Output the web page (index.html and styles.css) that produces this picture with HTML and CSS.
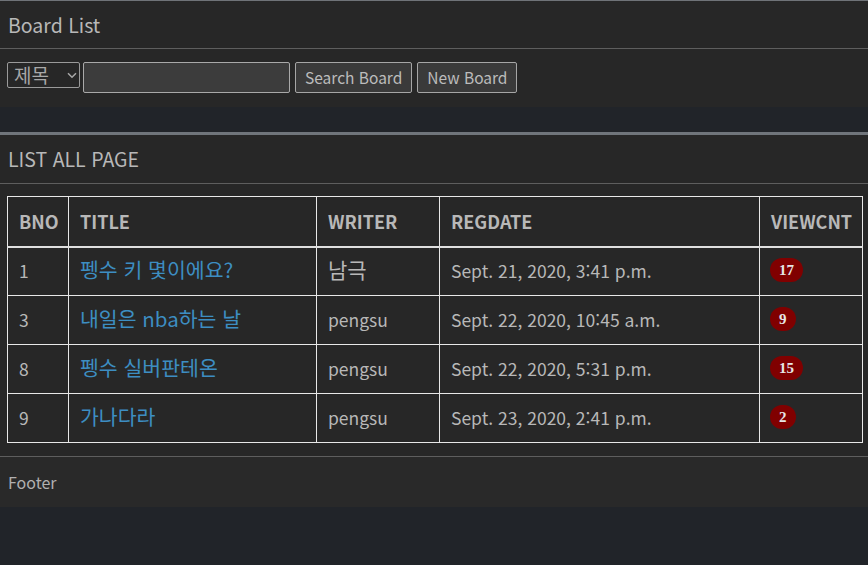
FILE: index.html
```html
<!DOCTYPE html>
<html lang="ko">
<head>
<meta charset="utf-8">
<title>Board List</title>
<link rel="stylesheet" href="styles.css">
</head>
<body>
<section class="box box-top">
  <div class="box-header"><h3 class="box-title">Board List</h3></div>
  <div class="box-body search-row">
    <div class="select-wrap">
      <select class="search-type">
        <option>제목</option>
        <option>내용</option>
        <option>작성자</option>
      </select>
      <svg class="chev" width="10" height="7" viewBox="0 0 10 7"><path d="M1 1.2 L5 5.2 L9 1.2" fill="none" stroke="#a8a8a8" stroke-width="1.5"/></svg>
    </div>
    <input class="keyword" type="text">
    <button class="btn">Search Board</button>
    <button class="btn">New Board</button>
  </div>
</section>

<section class="box box-main">
  <div class="box-header box-header-main"><h3 class="box-title">LIST ALL PAGE</h3></div>
  <div class="box-body table-wrap">
    <table class="board">
      <colgroup>
        <col class="c-bno"><col class="c-title"><col class="c-writer"><col class="c-date"><col class="c-cnt">
      </colgroup>
      <thead>
        <tr><th>BNO</th><th>TITLE</th><th>WRITER</th><th>REGDATE</th><th>VIEWCNT</th></tr>
      </thead>
      <tbody>
        <tr><td>1</td><td><a href="#" class="link">펭수 키 몇이에요?</a></td><td><span class="ko">남극</span></td><td>Sept. 21, 2020, 3:41 p.m.</td><td><span class="badge">17</span></td></tr>
        <tr><td>3</td><td><a href="#" class="link">내일은 nba하는 날</a></td><td>pengsu</td><td>Sept. 22, 2020, 10:45 a.m.</td><td><span class="badge">9</span></td></tr>
        <tr><td>8</td><td><a href="#" class="link">펭수 실버판테온</a></td><td>pengsu</td><td>Sept. 22, 2020, 5:31 p.m.</td><td><span class="badge">15</span></td></tr>
        <tr><td>9</td><td><a href="#" class="link">가나다라</a></td><td>pengsu</td><td>Sept. 23, 2020, 2:41 p.m.</td><td><span class="badge">2</span></td></tr>
      </tbody>
    </table>
  </div>
  <div class="box-footer">Footer</div>
</section>
</body>
</html>
```

FILE: styles.css
```css
html, body {
  margin: 0;
  padding: 0;
}
body {
  background: #212429;
  font-family: "Noto Sans CJK KR", "Noto Sans", sans-serif;
  color: #bdbdbd;
  width: 868px;
  height: 565px;
  overflow: hidden;
}
.box {
  background: #272727;
}
.box-top {
  border-top: 1px solid #6f7378;
}
.box-main {
  margin-top: 25px;
  border-top: 3px solid #70757b;
}
.box-header {
  height: 47px;
  border-bottom: 1px solid #5e5e5e;
  display: flex;
  align-items: center;
  padding: 0 8px;
}
.box-header-main {
  height: 48px;
}
.box-title {
  margin: 0;
  font-size: 19.5px;
  font-weight: 400;
  color: #b8b8b8;
  line-height: 1;
}
.search-row {
  display: flex;
  align-items: flex-start;
  padding: 13px 7px 14px;
}
.select-wrap {
  position: relative;
  width: 73px;
  height: 26px;
  margin-right: 3px;
}
.search-type {
  appearance: none;
  -webkit-appearance: none;
  width: 73px;
  height: 26px;
  box-sizing: border-box;
  background: #272727;
  color: #a8a8a8;
  border: 1px solid #9a9a9a;
  border-radius: 2px;
  font-family: "Noto Sans CJK KR", sans-serif;
  font-size: 19px;
  padding: 0 0 0 6px;
  line-height: 24px;
  margin: 0;
}
.chev {
  position: absolute;
  right: 3px;
  top: 10px;
  pointer-events: none;
}
.keyword {
  width: 207px;
  height: 31px;
  box-sizing: border-box;
  background: #3c3c3c;
  border: 1px solid #a9a9a9;
  border-radius: 2px;
  margin: 0 5px 0 0;
  color: #ccc;
}
.btn {
  height: 31px;
  box-sizing: border-box;
  background: #3a3a3a;
  border: 1px solid #a6a6a6;
  border-radius: 2px;
  color: #bcbcbc;
  font-family: "Noto Sans CJK KR", sans-serif;
  font-size: 15.5px;
  padding: 0 9px;
  margin: 0 5px 0 0;
  line-height: 29px;
}
.table-wrap {
  padding: 12px 6px 13px 7px;
}
.board {
  border-collapse: collapse;
  width: 855px;
  table-layout: fixed;
  font-size: 17.5px;
}
.c-bno { width: 61px; }
.c-title { width: 248px; }
.c-writer { width: 123px; }
.c-date { width: 320px; }
.c-cnt { width: 103px; }
.board th, .board td {
  border: 1px solid #e8e8e8;
  text-align: left;
  padding: 0 11px;
  height: 49px;
  box-sizing: border-box;
  white-space: nowrap;
  vertical-align: middle;
}
.board th {
  font-weight: 700;
  font-size: 18px;
  color: #b8b8b8;
  border-bottom: 2px solid #e0e0e0;
  height: 50px;
}
.board td {
  color: #b8b8b8;
  padding-bottom: 1px;
}
.ko {
  font-size: 21px;
  position: relative;
  top: -2px;
}
.link {
  color: #3d8ec2;
  text-decoration: none;
  font-size: 20.5px;
  position: relative;
  top: -2px;
}
.badge {
  display: inline-block;
  background: #800000;
  color: #e6e6e6;
  font-family: "Liberation Serif", serif;
  font-weight: 700;
  font-size: 15px;
  line-height: 24px;
  height: 24px;
  padding: 0 9px;
  border-radius: 12px;
  position: relative;
  top: -2px;
  left: -1px;
}
.box-footer {
  border-top: 1px solid #5e5e5e;
  height: 50px;
  display: flex;
  align-items: center;
  padding: 0 8px;
  font-size: 16px;
  color: #b0b0b0;
  background: #292929;
}
```
